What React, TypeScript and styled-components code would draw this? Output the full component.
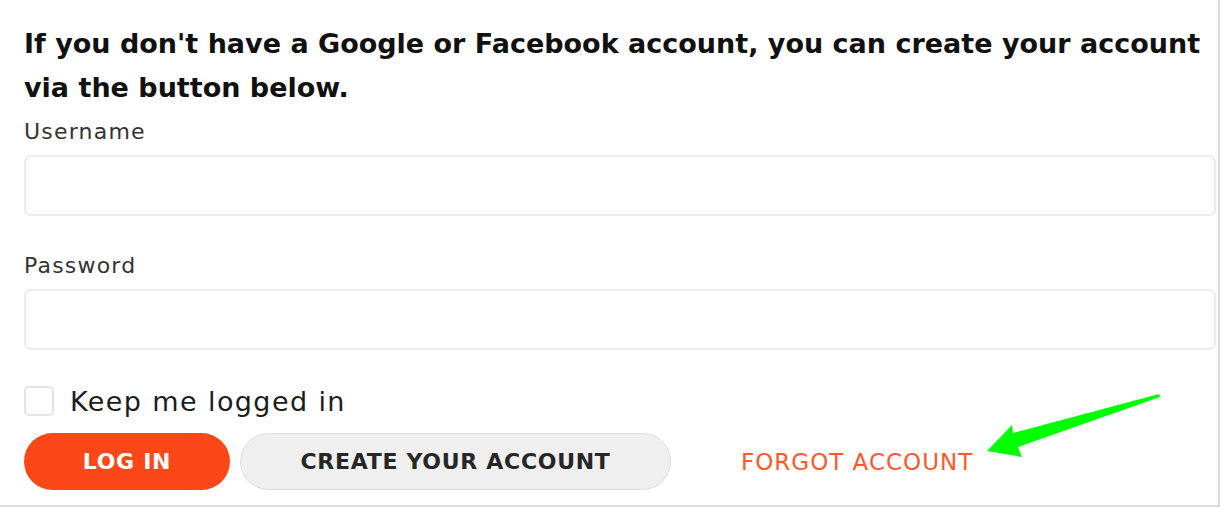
import React from 'react';
import styled, { createGlobalStyle } from 'styled-components';

const GlobalStyle = createGlobalStyle`
  html, body {
    margin: 0;
    padding: 0;
    background: #fff;
  }
  * { box-sizing: border-box; }
`;

const Frame = styled.div`
  position: relative;
  display: flex;
  flex-direction: column;
  align-items: flex-start;
  width: 1220px;
  height: 507px;
  border-right: 2px solid #dcdcdc;
  border-bottom: 2px solid #dcdcdc;
  padding: 22px 0 0 24px;
  font-family: 'DejaVu Sans', 'Liberation Sans', sans-serif;
  color: #1c1c1c;
  overflow: hidden;
`;

const Heading = styled.h2`
  margin: 0;
  font-size: 27px;
  font-weight: 700;
  line-height: 44px;
  color: #111;
  width: 1190px;
`;

const Field = styled.div`
  display: flex;
  flex-direction: column;
  width: 1192px;
  margin-bottom: 28px;
`;

const Label = styled.label`
  font-size: 22px;
  letter-spacing: 1.2px;
  line-height: 30px;
  color: #333;
  margin: 7px 0 8px;
`;

const Input = styled.input`
  height: 61px;
  border: 2px solid #ececec;
  border-radius: 7px;
  background: #fff;
  outline: none;
`;

const CheckRow = styled.label`
  display: flex;
  align-items: center;
  gap: 16px;
  font-size: 27px;
  letter-spacing: 1.4px;
  color: #1c1c1c;
  margin-top: 8px;
  height: 30px;
`;

const Box = styled.span`
  width: 30px;
  height: 30px;
  border: 2px solid #e4e4e4;
  border-radius: 5px;
`;

const Actions = styled.div`
  display: flex;
  align-items: center;
  gap: 10px;
  margin-top: 17px;
`;

const Button = styled.button<{ primary?: boolean; w: number }>`
  width: ${({ w }) => w}px;
  height: 57px;
  border-radius: 29px;
  font-family: inherit;
  font-size: 22px;
  letter-spacing: 0.7px;
  font-weight: 700;
  cursor: pointer;
  border: ${({ primary }) => (primary ? 'none' : '1.5px solid #dddddd')};
  background: ${({ primary }) => (primary ? '#fc4819' : '#efefef')};
  color: ${({ primary }) => (primary ? '#fff' : '#262626')};
`;

const Link = styled.a`
  margin-left: 60px;
  font-size: 23px;
  letter-spacing: 1px;
  color: #fc5a2c;
  text-decoration: none;
`;

const Arrow = styled.svg`
  position: absolute;
  left: 0;
  top: 0;
  pointer-events: none;
`;

export default function App() {
  return (
    <>
      <GlobalStyle />
      <Frame>
        <Heading>
          If you don't have a Google or Facebook account, you can create your account via the button below.
        </Heading>
        <Field>
          <Label>Username</Label>
          <Input />
        </Field>
        <Field>
          <Label>Password</Label>
          <Input type="password" />
        </Field>
        <CheckRow>
          <Box />
          Keep me logged in
        </CheckRow>
        <Actions>
          <Button primary w={206}>LOG IN</Button>
          <Button w={431}>CREATE YOUR ACCOUNT</Button>
          <Link>FORGOT ACCOUNT</Link>
        </Actions>
        <Arrow width="1220" height="507">
          <polygon
            points="1159,394 1013,433 1012,425 987,451 1022,457 1018,447 1160,397"
            fill="#00ff00"
          />
        </Arrow>
      </Frame>
    </>
  );
}
